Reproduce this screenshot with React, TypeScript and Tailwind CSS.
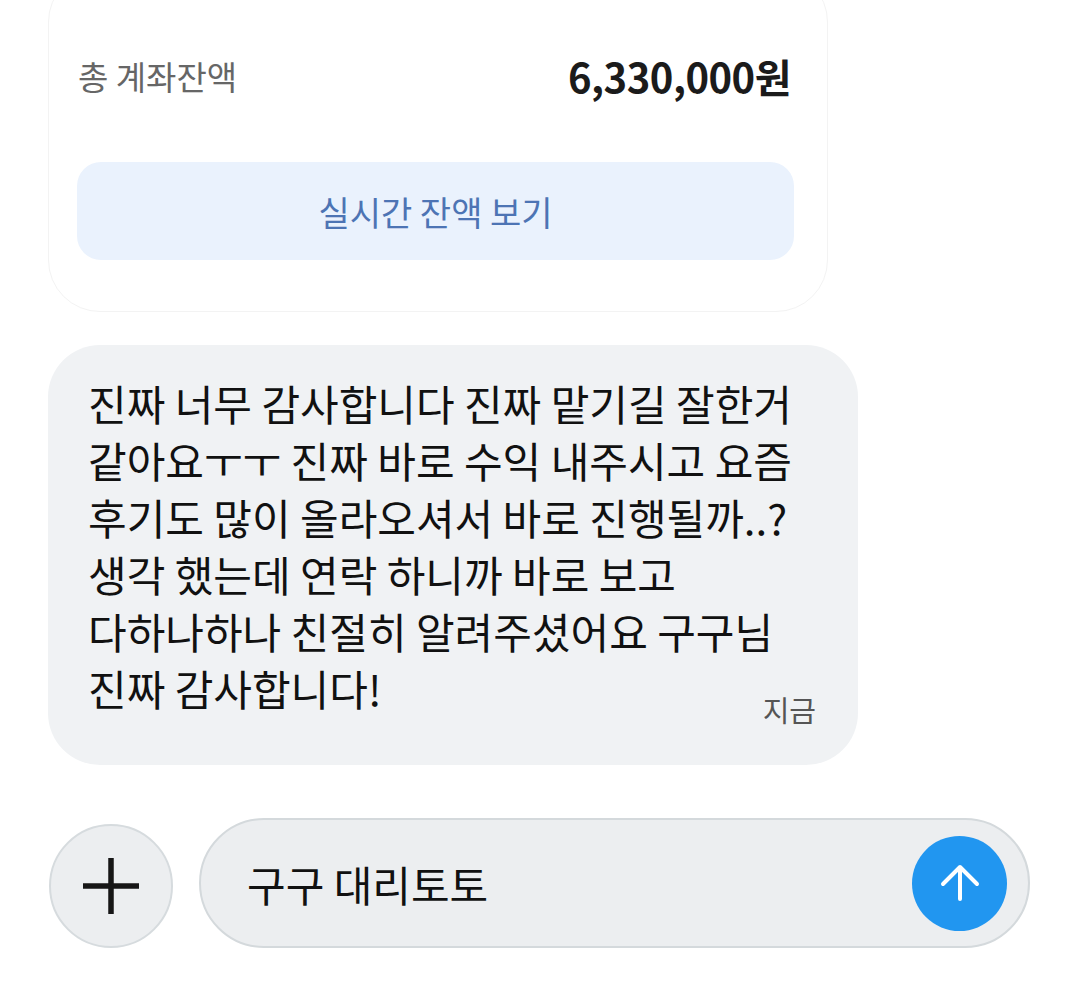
import * as React from "react"

const font = { fontFamily: '"Noto Sans CJK KR", "Noto Sans", sans-serif' }

const lines = [
    "진짜 너무 감사합니다 진짜 맡기길 잘한거",
    "같아요ㅜㅜ 진짜 바로 수익 내주시고 요즘",
    "후기도 많이 올라오셔서 바로 진행될까..?",
    "생각 했는데 연락 하니까 바로 보고",
    "다하나하나 친절히 알려주셨어요 구구님",
]

function BalanceCard() {
    return (
        <div className="ml-[48px] mt-[-30px] w-[780px] rounded-[52px] border border-[#f3f3f3] bg-white pb-[51px] pt-[85px]">
            <div className="flex h-[40px] items-center justify-between pl-[29px] pr-[36px]">
                <span className="text-[33px] leading-none text-[#666]">총 계좌잔액</span>
                <span className="text-[40px] font-bold leading-none tracking-[-0.5px] text-[#1b1b1b]">
                    6,330,000원
                </span>
            </div>
            <button className="ml-[28px] mt-[66px] flex h-[98px] w-[717px] items-center justify-center rounded-[24px] bg-[#eaf2fd] text-[34px] text-[#4d74b4]">
                실시간 잔액 보기
            </button>
        </div>
    )
}

function MessageBubble() {
    return (
        <div className="ml-[48px] mt-[33px] w-[810px] rounded-[52px] bg-[#f0f2f4] pb-[49px] pl-[40px] pr-[42px] pt-[29px] text-[42px] leading-[57px] text-[#111]">
            {lines.map((line) => (
                <div
                    key={line}
                    className="whitespace-nowrap">
                    {line}
                </div>
            ))}
            <div className="flex items-end justify-between">
                <span className="whitespace-nowrap">진짜 감사합니다!</span>
                <span className="mb-[-10px] text-[29px] leading-[34px] text-[#555]">지금</span>
            </div>
        </div>
    )
}

function Composer() {
    return (
        <div className="ml-[49px] mt-[53px] flex items-center gap-[26px]">
            <button className="mt-[6px] flex h-[124px] w-[124px] shrink-0 items-center justify-center rounded-full border-2 border-[#d6dbde] bg-[#eceef0]">
                <svg
                    width="58"
                    height="58"
                    viewBox="0 0 58 58">
                    <path
                        d="M29 1v56M1 29h56"
                        stroke="#161616"
                        strokeWidth="5.5"
                    />
                </svg>
            </button>
            <div className="flex h-[130px] w-[831px] items-center justify-between rounded-full border-2 border-[#d4d9dc] bg-[#eceef0] pl-[46px] pr-[21px]">
                <span className="text-[42px] text-[#111]">구구 대리토토</span>
                <div className="flex h-[95px] w-[95px] items-center justify-center rounded-full bg-[#2196f0]">
                    <svg
                        width="40"
                        height="40"
                        viewBox="0 0 40 40">
                        <path
                            d="M20 36V4M3 21L20 4l17 17"
                            fill="none"
                            stroke="white"
                            strokeWidth="4"
                            strokeLinecap="round"
                            strokeLinejoin="round"
                        />
                    </svg>
                </div>
            </div>
        </div>
    )
}

export default function App() {
    return (
        <div
            className="h-[1008px] w-[1080px] overflow-hidden bg-white"
            style={font}>
            <BalanceCard />
            <MessageBubble />
            <Composer />
        </div>
    )
}
